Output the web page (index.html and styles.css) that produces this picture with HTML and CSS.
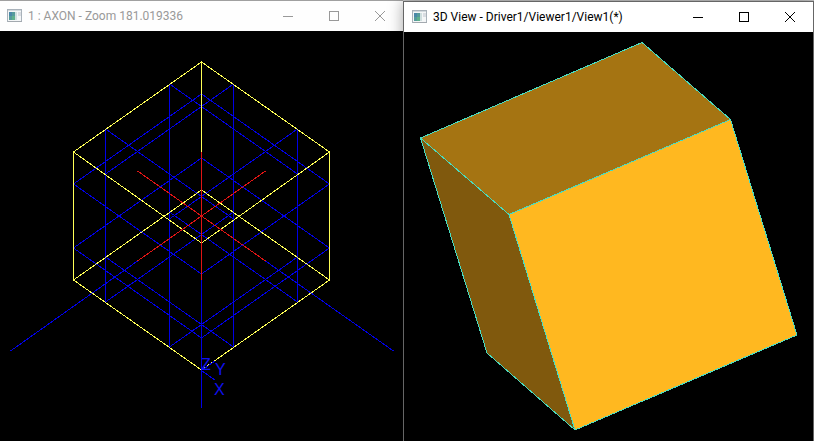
FILE: index.html
```html
<!DOCTYPE html>
<html lang="en">
<head>
  <meta charset="UTF-8" />
  <title>AXON / 3D View</title>
  <link rel="stylesheet" href="styles.css">
</head>
<body>

  <svg class="defs" aria-hidden="true">
    <symbol id="app" viewBox="0 0 16 14">
      <rect x="0.5" y="0.5" width="14" height="12" fill="#f4f6f7" stroke="#a9b2ba" />
      <rect x="1" y="1" width="13" height="1" fill="#d3dade" />
      <rect x="2" y="3" width="6" height="8" fill="#559b9b" />
      <rect x="2" y="3" width="3" height="4" fill="#4a88a8" />
      <rect x="5" y="7" width="3" height="4" fill="#5fb08c" />
      <rect x="8" y="3" width="2" height="8" fill="#cfdfdf" />
      <rect x="11" y="3" width="3" height="4" fill="#d9dde2" />
      <rect x="1" y="12" width="14" height="1" fill="#a3a9af" />
    </symbol>
    <symbol id="minimize" viewBox="0 0 12 12">
      <path d="M1 6.5H11" />
    </symbol>
    <symbol id="maximize" viewBox="0 0 12 12">
      <path d="M1.5 1.5H10.5V10.5H1.5Z" />
    </symbol>
    <symbol id="close" viewBox="0 0 12 12">
      <path d="M1 1L11 11M11 1L1 11" shape-rendering="auto" />
    </symbol>
  </svg>

  <main class="desktop">
    <section class="window inactive">
      <header class="titlebar">
        <svg class="app-icon"><use href="#app" /></svg>
        <h1>1 : AXON - Zoom 181.019336</h1>
        <button type="button" aria-label="Minimize"><svg><use href="#minimize" /></svg></button>
        <button type="button" aria-label="Maximize"><svg><use href="#maximize" /></svg></button>
        <button type="button" aria-label="Close"><svg><use href="#close" /></svg></button>
      </header>
      <svg class="view wireframe" viewBox="0 31 403 410">
        <!-- isolines, two each way on every face -->
        <g class="blue">
          <path d="M201.500 94L73.500 184M201.500 158L73.500 248M201.500 94L329.500 184M201.500 158L329.500 248" />
          <path d="M73.500 184L201.500 274M73.500 248L201.500 338M329.500 184L201.500 274M329.500 248L201.500 338" />
          <path d="M169.500 84L297.500 174M105.500 129L233.500 219M233.500 84L105.500 174M297.500 129L169.500 219" />
          <path d="M169.500 212L297.500 302M105.500 257L233.500 347M233.500 212L105.500 302M297.500 257L169.500 347" />
          <rect x="105" y="129" width="1" height="174" />
          <rect x="169" y="84" width="1" height="264" />
          <rect x="233" y="84" width="1" height="264" />
          <rect x="297" y="129" width="1" height="174" />
        </g>
        <!-- box edges -->
        <g class="yellow">
          <path d="M73.500 152L201.500 62L329.500 152M73.500 280L201.500 370L329.500 280" />
          <path d="M73.500 152L201.500 243L329.500 152M73.500 280L201.500 190L329.500 280" />
          <rect x="73" y="152" width="1" height="129" />
          <rect x="329" y="152" width="1" height="129" />
          <rect x="201" y="62" width="1" height="128" />
        </g>
        <!-- world axes -->
        <g class="blue">
          <path d="M137.500 261L10.500 351M265.500 261L393.500 351" />
          <rect x="201" y="280" width="1" height="128" />
        </g>
        <g class="red">
          <path d="M137.500 171L265.500 261M265.500 171L137.500 261" />
          <rect x="201" y="152" width="1" height="128" />
        </g>
        <!-- trihedron -->
        <path class="blue" d="M201.500 370.500L215.500 380.500M201.500 370.500L215.500 360.500" />
        <g class="axis-label">
          <text x="201" y="370">Z</text>
          <text x="215" y="375">Y</text>
          <text x="214" y="395">X</text>
        </g>
      </svg>
    </section>

    <section class="window active">
      <header class="titlebar">
        <svg class="app-icon"><use href="#app" /></svg>
        <h1>3D View - Driver1/Viewer1/View1(*)</h1>
        <button type="button" aria-label="Minimize"><svg><use href="#minimize" /></svg></button>
        <button type="button" aria-label="Maximize"><svg><use href="#maximize" /></svg></button>
        <button type="button" aria-label="Close"><svg><use href="#close" /></svg></button>
      </header>
      <svg class="view shaded" viewBox="404 32 409 409">
        <path class="top" d="M420.500 138L642 42.500L730.500 119.500L509 214.500Z" />
        <path class="side" d="M420.500 138L509 214.500L575 430L487 353Z" />
        <path class="front" d="M509 214.500L730.500 119.500L797 335L575 430Z" />
      </svg>
    </section>
  </main>

</body>
</html>
```
FILE: styles.css
```css
* {
  box-sizing: border-box;
}
body {
  margin: 0;
  background: #c8c8c8;
  font-family: Roboto, "Open Sans", sans-serif;
}
.defs {
  display: none;
}
.desktop {
  display: grid;
  grid-template-columns: 403fr 411fr;
  height: 100vh;
}
.window {
  display: flex;
  flex-direction: column;
  min-width: 0;
  min-height: 0;
  background: #000;
}
.inactive {
  border-top: 1px solid #a0a0a0;
  color: #999;
}
.active {
  position: relative;
  margin-top: 1px;
  border: 1px solid #666;
  border-bottom: none;
  color: #000;
  box-shadow: 0 0 14px rgba(0, 0, 0, 0.35);
}
.titlebar {
  display: flex;
  align-items: center;
  flex: none;
  height: 30px;
  padding-left: 7px;
  background: #fff;
}
.inactive .titlebar {
  background: #fefefe;
}
.active .titlebar {
  padding-left: 8px;
}
.app-icon {
  flex: none;
  width: 16px;
  height: 14px;
}
.titlebar h1 {
  flex: 1;
  margin: 0 0 0 5px;
  overflow: hidden;
  font-size: 12px;
  font-weight: 400;
  line-height: 16px;
  white-space: nowrap;
}
.titlebar button {
  display: flex;
  align-items: center;
  justify-content: center;
  flex: none;
  width: 46px;
  height: 30px;
  padding: 0;
  border: none;
  background: none;
  color: inherit;
}
.titlebar button:hover {
  background: #e5e5e5;
}
.titlebar button svg {
  width: 12px;
  height: 12px;
  fill: none;
  stroke: currentColor;
  shape-rendering: crispEdges;
}
.view {
  display: block;
  flex: 1;
  width: 100%;
  min-height: 0;
}
.wireframe path {
  fill: none;
  shape-rendering: crispEdges;
}
.wireframe rect {
  stroke: none;
}
.blue {
  fill: #0000e6;
  stroke: #0000e6;
}
.yellow {
  fill: #ffff55;
  stroke: #ffff55;
}
.red {
  fill: #e01414;
  stroke: #e01414;
}
.axis-label {
  fill: #1010f0;
  font-family: "Liberation Sans", Arial, sans-serif;
  font-size: 16px;
}
.shaded path {
  stroke: #48dcc0;
  stroke-linejoin: round;
  shape-rendering: crispEdges;
}
.top {
  fill: #a57412;
}
.side {
  fill: #80590d;
}
.front {
  fill: #ffb820;
}
```
